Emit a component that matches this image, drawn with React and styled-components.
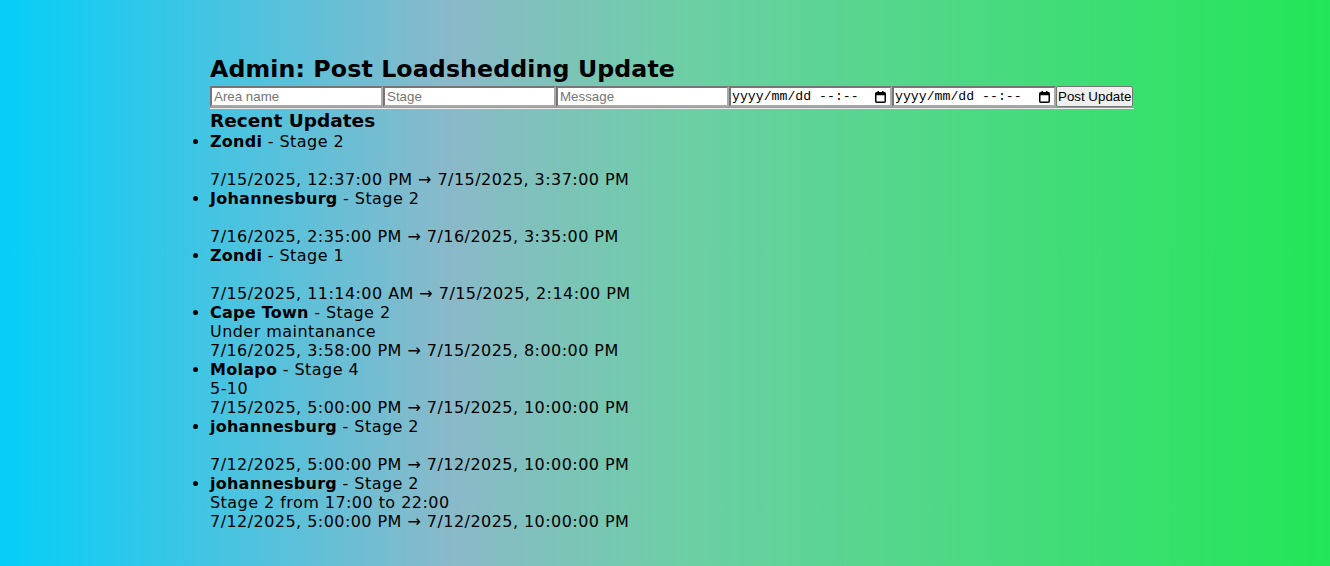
import React, { useState } from 'react';
import styled, { createGlobalStyle } from 'styled-components';

const GlobalStyle = createGlobalStyle`
  html, body {
    margin: 0;
    padding: 0;
    height: 100%;
  }
  body {
    font-family: "DejaVu Sans", Verdana, sans-serif;
    background: linear-gradient(to right, #05cef8 0%, #8ab9c9 34%, #6ccfa4 52%, #22e658 100%);
    min-height: 566px;
  }
`;

const Page = styled.div`
  padding: 52px 0 0 210px;
`;

const Panel = styled.div`
  width: 924px;
`;

const Title = styled.h2`
  margin: 0;
  font-size: 23.7px;
  font-weight: bold;
  line-height: 34px;
  letter-spacing: 0.1px;
  color: #000;
`;

const Form = styled.form`
  display: flex;
  align-items: center;
`;

const Field = styled.input`
  box-sizing: border-box;
  width: ${(p) => p.$w}px;
  height: 21px;
  margin: 0;
  padding: 1px 2px;
  border: 2px solid;
  border-color: #767676 #a8a8a8 #a8a8a8 #767676;
  background: #fff;
  font-family: "Liberation Sans", Arial, sans-serif;
  font-size: 13.33px;
  color: #000;
  outline: none;

  &::placeholder {
    color: #757575;
  }
`;

const DateBox = styled.label`
  box-sizing: border-box;
  display: flex;
  align-items: center;
  justify-content: space-between;
  width: ${(p) => p.$w}px;
  height: 21px;
  padding: 0 4px 0 1px;
  border: 2px solid;
  border-color: #767676 #a8a8a8 #a8a8a8 #767676;
  background: #fff;
  font-family: "Liberation Mono", "Courier New", monospace;
  font-size: 13.2px;
  color: #000;
  white-space: pre;
  cursor: text;
`;

const CalendarIcon = () => (
  <svg width="11" height="12" viewBox="0 0 11 12" aria-hidden="true">
    <rect x="0.75" y="1.75" width="9.5" height="9.5" rx="1" fill="none" stroke="#000" strokeWidth="1.5" />
    <rect x="0.75" y="1.75" width="9.5" height="2.5" fill="#000" />
    <rect x="2.5" y="0" width="1.5" height="2" fill="#000" />
    <rect x="7" y="0" width="1.5" height="2" fill="#000" />
  </svg>
);

const SubmitButton = styled.button`
  box-sizing: border-box;
  width: 77px;
  height: 21px;
  margin: 0;
  padding: 0 1px;
  border: 1px solid #767676;
  border-radius: 2px;
  background: #efefef;
  font-family: "Liberation Sans", Arial, sans-serif;
  font-size: 13.33px;
  color: #000;
  white-space: nowrap;
`;

const Rule = styled.hr`
  margin: 0;
  border: none;
  border-top: 1px solid #9a9a9a;
  border-bottom: 1px solid #eeeeee;
`;

const SectionTitle = styled.h3`
  margin: 0;
  font-size: 18.5px;
  font-weight: bold;
  line-height: 23px;
`;

const UpdateList = styled.ul`
  margin: 0;
  padding: 0;
  font-size: 16px;
  line-height: 19px;
  letter-spacing: 0.45px;

  strong {
    letter-spacing: 0.25px;
  }
`;

const UpdateItem = styled.li`
  margin: 0;
`;

const updates = [
  { area: 'Zondi', stage: '2', message: '', start: '7/15/2025, 12:37:00 PM', end: '7/15/2025, 3:37:00 PM' },
  { area: 'Johannesburg', stage: '2', message: '', start: '7/16/2025, 2:35:00 PM', end: '7/16/2025, 3:35:00 PM' },
  { area: 'Zondi', stage: '1', message: '', start: '7/15/2025, 11:14:00 AM', end: '7/15/2025, 2:14:00 PM' },
  { area: 'Cape Town', stage: '2', message: 'Under maintanance', start: '7/16/2025, 3:58:00 PM', end: '7/15/2025, 8:00:00 PM' },
  { area: 'Molapo', stage: '4', message: '5-10', start: '7/15/2025, 5:00:00 PM', end: '7/15/2025, 10:00:00 PM' },
  { area: 'johannesburg', stage: '2', message: '', start: '7/12/2025, 5:00:00 PM', end: '7/12/2025, 10:00:00 PM' },
  { area: 'johannesburg', stage: '2', message: 'Stage 2 from 17:00 to 22:00', start: '7/12/2025, 5:00:00 PM', end: '7/12/2025, 10:00:00 PM' },
];

const App = () => {
  const [area, setArea] = useState('');
  const [stage, setStage] = useState('');
  const [message, setMessage] = useState('');

  const handleSubmit = (e) => {
    e.preventDefault();
  };

  return (
    <>
      <GlobalStyle />
      <Page>
        <Panel>
          <Title>Admin: Post Loadshedding Update</Title>
          <Form onSubmit={handleSubmit}>
            <Field $w={173} placeholder="Area name" value={area} onChange={(e) => setArea(e.target.value)} />
            <Field $w={173} placeholder="Stage" value={stage} onChange={(e) => setStage(e.target.value)} />
            <Field $w={173} placeholder="Message" value={message} onChange={(e) => setMessage(e.target.value)} />
            <DateBox $w={163}>
              <span>yyyy/mm/dd --:--</span>
              <CalendarIcon />
            </DateBox>
            <DateBox $w={164}>
              <span>yyyy/mm/dd --:--</span>
              <CalendarIcon />
            </DateBox>
            <SubmitButton type="submit">Post Update</SubmitButton>
          </Form>
          <Rule />
          <SectionTitle>Recent Updates</SectionTitle>
          <UpdateList>
            {updates.map((u, i) => (
              <UpdateItem key={i}>
                <strong>{u.area}</strong> - Stage {u.stage}
                <br />
                {u.message}
                <br />
                {u.start} → {u.end}
              </UpdateItem>
            ))}
          </UpdateList>
        </Panel>
      </Page>
    </>
  );
};

export default App;
